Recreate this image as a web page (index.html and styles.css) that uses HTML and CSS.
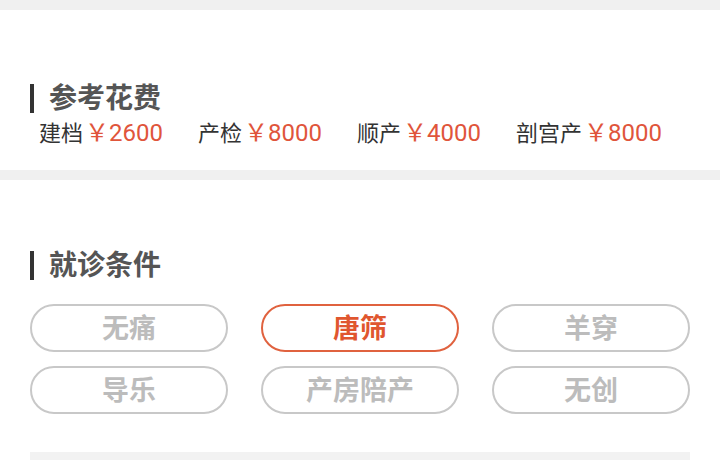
FILE: index.html
```html
<!DOCTYPE html>
<html lang="zh-CN">
<head>
    <meta charset="UTF-8">
    <meta name="viewport" content="width=device-width, initial-scale=1.0">
    <title>就诊信息</title>
    <link rel="stylesheet" href="styles.css">
</head>
<body>
    <div class="block cost">
        <h2 class="title">参考花费</h2>
        <div class="prices">
            <span class="item">建档<em>￥2600</em></span>
            <span class="item">产检<em>￥8000</em></span>
            <span class="item">顺产<em>￥4000</em></span>
            <span class="item">剖宫产<em>￥8000</em></span>
        </div>
    </div>
    <div class="block cond">
        <h2 class="title">就诊条件</h2>
        <div class="tags">
            <span class="tag">无痛</span>
            <span class="tag on">唐筛</span>
            <span class="tag">羊穿</span>
            <span class="tag">导乐</span>
            <span class="tag">产房陪产</span>
            <span class="tag">无创</span>
        </div>
        <div class="more"></div>
    </div>
</body>
</html>
```

FILE: styles.css
```css
*{
    margin: 0;
    padding: 0;
    box-sizing: border-box;
}
html,body{
    height: 100%;
    overflow: hidden;
}
body{
    background: #f0f0f0;
    font-family: Roboto, "Noto Sans CJK SC", sans-serif;
    padding-top: 10px;
    display: flex;
    flex-direction: column;
}
.block{
    background: #fff;
}
.cost{
    height: 160px;
    padding-top: 74px;
    margin-bottom: 10px;
}
.title{
    display: flex;
    align-items: center;
    height: 29px;
    padding-left: 30px;
    font-size: 28px;
    line-height: 29px;
    font-weight: 700;
    color: #555;
}
.title::before{
    content: "";
    width: 4px;
    height: 29px;
    background: #333;
    margin-right: 15px;
}
.prices{
    display: flex;
    padding-left: 39px;
    margin-top: 5px;
    height: 30px;
    line-height: 30px;
    font-size: 22px;
    color: #333;
}
.item{
    width: 159px;
    white-space: nowrap;
}
.item em{
    font-style: normal;
    font-size: 24px;
    color: #e0553b;
    margin-left: 2px;
}
.cond{
    flex: 1;
    padding-top: 71px;
}
.tags{
    display: grid;
    grid-template-columns: repeat(3, 1fr);
    column-gap: 33px;
    row-gap: 14px;
    padding: 0 30px;
    margin-top: 24px;
}
.tag{
    height: 48px;
    border: 2px solid #c8c8c8;
    border-radius: 24px;
    text-align: center;
    line-height: 46px;
    font-size: 27px;
    font-weight: 700;
    color: #bcbcbc;
}
.tag.on{
    border-color: #e0623f;
    color: #e0562f;
}
.more{
    margin: 38px 30px 0;
    height: 8px;
    background: #f2f2f2;
}
```
